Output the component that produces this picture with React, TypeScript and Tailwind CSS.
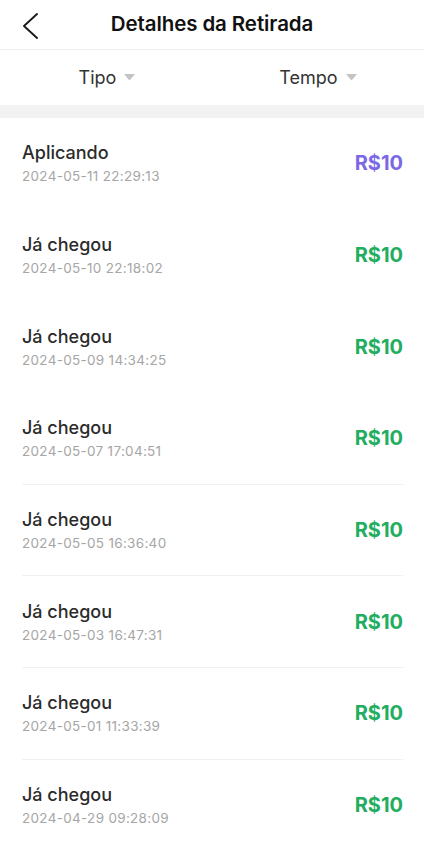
const rows = [
  { status: "Aplicando", time: "2024-05-11 22:29:13", pending: true, line: false },
  { status: "Já chegou", time: "2024-05-10 22:18:02", pending: false, line: false },
  { status: "Já chegou", time: "2024-05-09 14:34:25", pending: false, line: false },
  { status: "Já chegou", time: "2024-05-07 17:04:51", pending: false, line: true },
  { status: "Já chegou", time: "2024-05-05 16:36:40", pending: false, line: true },
  { status: "Já chegou", time: "2024-05-03 16:47:31", pending: false, line: true },
  { status: "Já chegou", time: "2024-05-01 11:33:39", pending: false, line: true },
  { status: "Já chegou", time: "2024-04-29 09:28:09", pending: false, line: false },
];

const Caret = () => (
  <svg width="11" height="7" viewBox="0 0 11 7" className="ml-2">
    <path d="M0 0 L11 0 L5.5 6.5 Z" fill="#c4c4c4" />
  </svg>
);

export default function App() {
  return (
    <div className="min-h-screen bg-white font-['Inter','Noto_Sans',sans-serif] text-[#222]">
      {/* HEADER */}
      <header className="relative flex h-[50px] items-center justify-center border-b border-[#eeeeee]">
        <button className="absolute left-[20px] top-[12px]">
          <svg width="20" height="28" viewBox="0 0 20 28">
            <path
              d="M17 2 L4 14 L17 26"
              fill="none"
              stroke="#1a1a1a"
              strokeWidth="1.9"
              strokeLinecap="round"
              strokeLinejoin="round"
            />
          </svg>
        </button>
        <h1 className="text-[20.5px] font-semibold tracking-[-0.1px] text-[#111]">
          Detalhes da Retirada
        </h1>
      </header>

      {/* FILTERS */}
      <div className="grid h-[55px] grid-cols-2">
        <button className="flex items-center justify-center pl-[2px] text-[18px] text-[#333]">
          Tipo
          <Caret />
        </button>
        <button className="flex items-center justify-center text-[18px] text-[#333]">
          Tempo
          <Caret />
        </button>
      </div>
      <div className="h-[13px] bg-[#f2f2f2]" />

      {/* LIST */}
      <ul className="pl-[22px] pr-[21px]">
        {rows.map((r, i) => (
          <li
            key={i}
            className={`flex h-[91.7px] items-center justify-between border-b ${
              r.line ? "border-[#f0f0f0]" : "border-transparent"
            }`}
          >
            <div className="flex flex-col">
              <span className="text-[18px] font-medium leading-[24px] text-[#2b2b2b]">
                {r.status}
              </span>
              <span className="mt-[2px] text-[13.5px] leading-[18px] tracking-[0.3px] text-[#a6a6a6]">
                {r.time}
              </span>
            </div>
            <span
              className={`text-[20px] font-bold ${
                r.pending ? "text-[#7b68e6]" : "text-[#22ad5f]"
              }`}
            >
              R$10
            </span>
          </li>
        ))}
      </ul>
    </div>
  );
}
